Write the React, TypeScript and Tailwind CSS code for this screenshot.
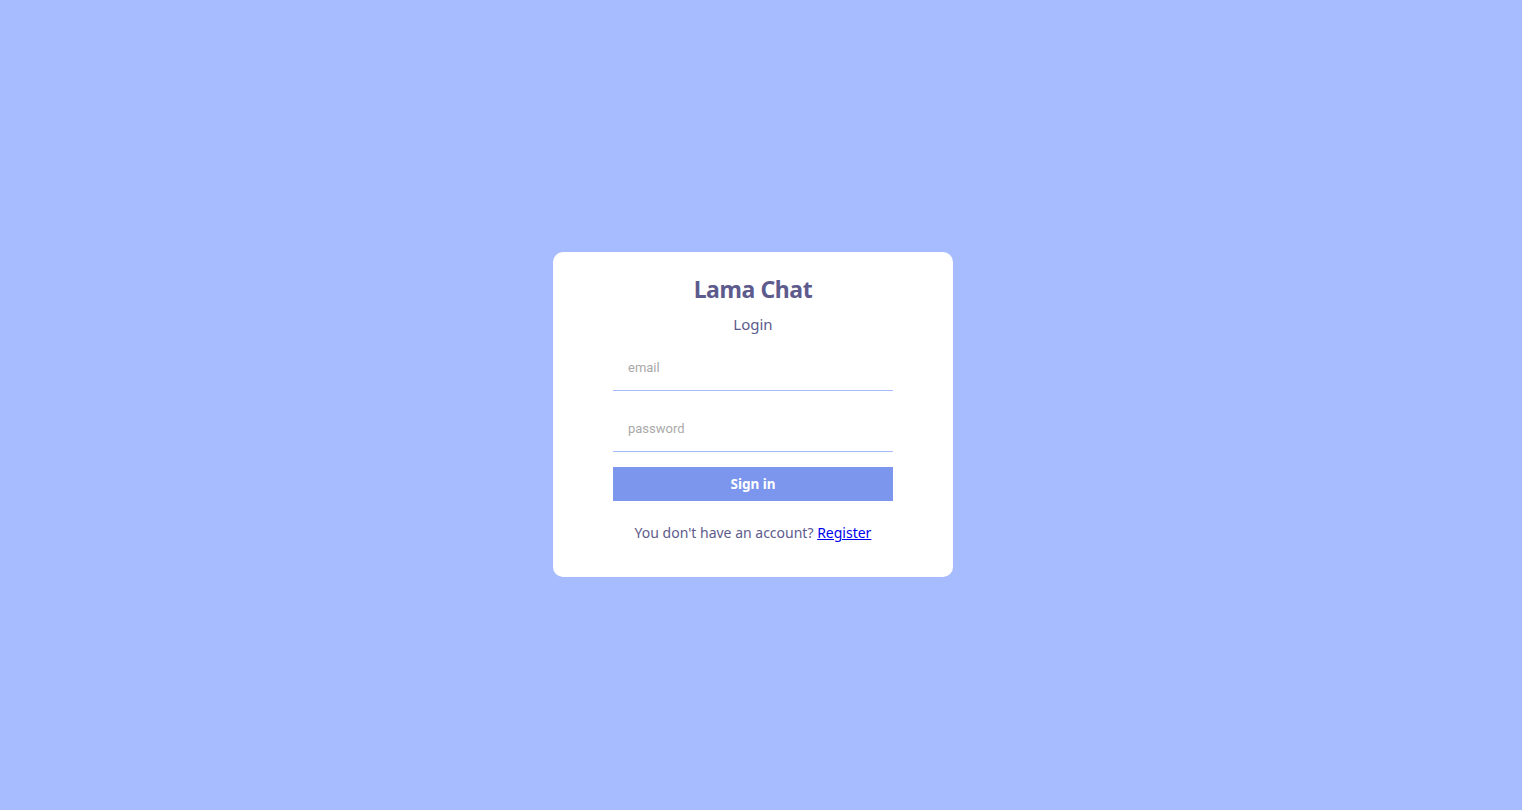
export default function App() {
  return (
    <div className="flex h-screen w-full items-center justify-center bg-[#a7bcff] pt-[19px] pr-[16px] font-['Noto_Sans',sans-serif]">
      <div className="flex flex-col items-center gap-[10px] rounded-[10px] bg-white px-[60px] pt-[20px] pb-[23px]">
        <span className="pt-[2px] text-[23px] leading-[30px] font-bold tracking-[-0.4px] text-[#5d5b8d]">Lama Chat</span>
        <span className="text-[15px] leading-[21px] text-[#5d5b8d]">Login</span>
        <form className="flex flex-col gap-[15px]" onSubmit={(e) => e.preventDefault()}>
          <input
            type="email"
            placeholder="email"
            className="w-[280px] border-b border-[#a7bcff] p-[15px] font-['Roboto',sans-serif] text-[13px] leading-[15px] outline-none placeholder:text-[#a9a9a9]"
          />
          <input
            type="password"
            placeholder="password"
            className="w-[280px] border-b border-[#a7bcff] p-[15px] font-['Roboto',sans-serif] text-[13px] leading-[15px] outline-none placeholder:text-[#a9a9a9]"
          />
          <button className="bg-[#7b96ec] p-[10px] text-[13.5px] leading-[14px] font-bold text-white">Sign in</button>
        </form>
        <p className="mt-[12px] mb-[12px] text-[14px] leading-[19px] text-[#5d5b8d]">
          You don't have an account?{" "}
          <a href="#" className="text-[#0000ee] underline">
            Register
          </a>
        </p>
      </div>
    </div>
  );
}
